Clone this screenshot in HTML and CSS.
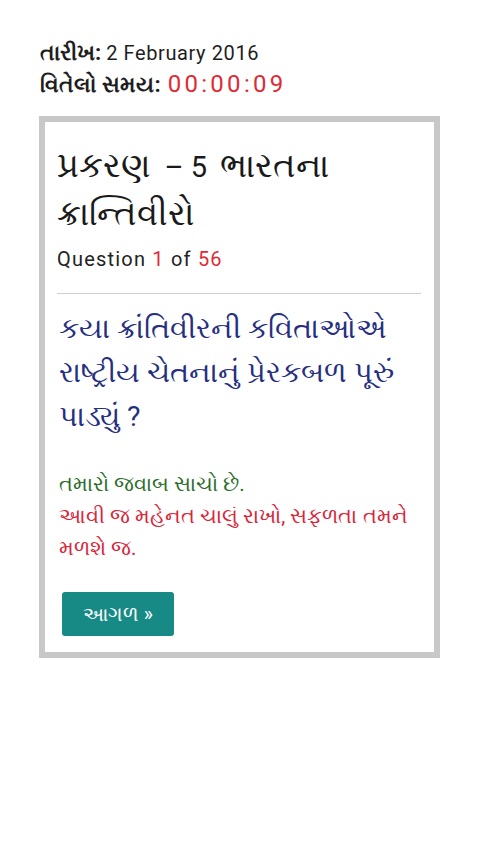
FILE: index.html
```html
<!DOCTYPE html>
<html lang="gu">
<head>
<meta charset="utf-8">
<link rel="stylesheet" href="styles.css">
</head>
<body>
<div class="page">
  <div class="meta">
    <div class="meta-row"><span class="label">તારીખ:</span> <span class="latin">2 February 2016</span></div>
    <div class="meta-row"><span class="label">વિતેલો સમય:</span> <span class="timer">00:00:09</span></div>
  </div>
  <div class="card">
    <h1 class="title">પ્રકરણ <span class="num">– 5</span> ભારતના ક્રાન્તિવીરો</h1>
    <div class="count">Question <span class="red">1</span> of <span class="red">56</span></div>
    <hr class="divider">
    <div class="question">કયા ક્રાંતિવીરની કવિતાઓએ રાષ્ટ્રીય ચેતનાનું પ્રેરકબળ પૂરું પાડ્યું ?</div>
    <div class="result">
      <div class="correct">તમારો જવાબ સાચો છે.</div>
      <div class="encourage">આવી જ મહેનત ચાલું રાખો, સફળતા તમને મળશે જ.</div>
    </div>
    <button class="next">આગળ »</button>
  </div>
</div>
</body>
</html>
```
FILE: styles.css
```css
html, body { margin: 0; padding: 0; background: #fff; }
body { font-family: Roboto, sans-serif; color: #222; }
.page { padding: 37px 39px 0 40px; }
.meta-row { font-size: 20px; line-height: 31px; color: #1e1e1e; white-space: nowrap; }
.label { font-weight: bold; font-size: 22px; }
.latin { font-size: 20px; letter-spacing: 0.6px; }
.timer { color: #e02a36; font-size: 24px; letter-spacing: 3.3px; margin-left: 2px; }
.card { width: 401px; box-sizing: border-box; border: 6px solid #c8c8c8; margin-top: 15px; margin-left: -1px; padding: 20px 13px 16px 12px; }
.title { font-size: 34px; font-weight: normal; line-height: 46px; margin: 0; color: #1a1a1a; }
.num { font-size: 29px; margin: 0 5px; }
.count { font-size: 20px; line-height: 46px; letter-spacing: 1.2px; color: #222; }
.red { color: #e02a36; }
.divider { border: 0; border-top: 1px solid #cfcfcf; margin: 11px 0 13px; }
.question { font-size: 28.5px; line-height: 44px; color: #262f80; padding-left: 2px; }
.result { margin-top: 29px; font-size: 20.5px; line-height: 32px; padding-left: 2px; }
.correct { color: #2d6e2d; }
.encourage { color: #d8263a; }
.next { display: block; margin: 28px 0 0 5px; background: #178a86; color: #fff; border: 0; border-radius: 3px; font-family: Roboto, sans-serif; font-size: 19.5px; width: 112px; height: 44px; padding: 0; }
```
